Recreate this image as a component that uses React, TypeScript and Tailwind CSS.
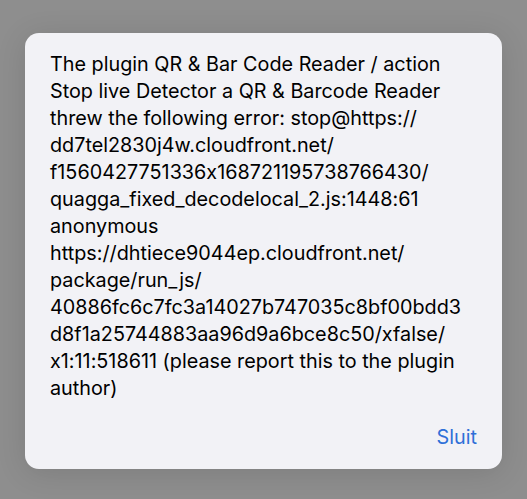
const lines = [
  "The plugin QR & Bar Code Reader / action",
  "Stop live Detector a QR & Barcode Reader",
  "threw the following error: stop@https://",
  "dd7tel2830j4w.cloudfront.net/",
  "f1560427751336x168721195738766430/",
  "quagga_fixed_decodelocal_2.js:1448:61",
  "anonymous",
  "https://dhtiece9044ep.cloudfront.net/",
  "package/run_js/",
  "40886fc6c7fc3a14027b747035c8bf00bdd3",
  "d8f1a25744883aa96d9a6bce8c50/xfalse/",
  "x1:11:518611 (please report this to the plugin",
  "author)",
];

export default function App() {
  return (
    <div className="flex h-[499px] w-[527px] items-start bg-[#8e8e8e] px-[25px] pt-[33px] font-['Inter',sans-serif] [font-feature-settings:'calt'_0]">
      <div className="flex w-[477px] flex-col rounded-[14px] bg-[#f2f2f6] pl-[25px] pr-4 pt-[18px] pb-[18px] shadow-[0_4px_30px_rgba(0,0,0,0.12)]">
        <p className="text-[19.8px] leading-[27px] text-black">
          {lines.map((line) => (
            <span className="block whitespace-nowrap" key={line}>
              {line}
            </span>
          ))}
        </p>
        <div className="mt-[22px] flex justify-end pr-[9px]">
          <button className="text-[19.8px] leading-[27px] text-[#2f6fd8]" type="button">
            Sluit
          </button>
        </div>
      </div>
    </div>
  );
}
